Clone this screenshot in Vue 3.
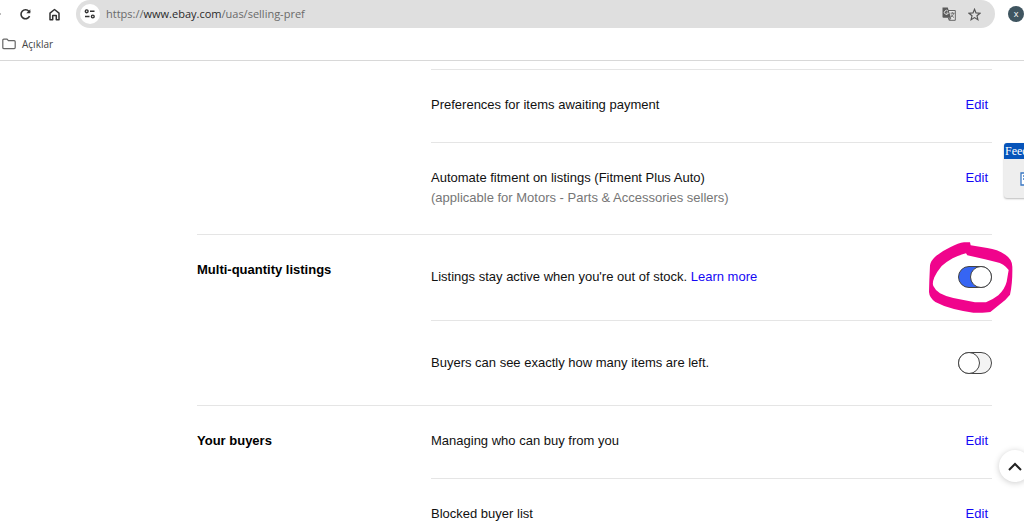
<script setup>
import { ref } from 'vue'

const sections = ref([
  {
    title: '',
    rows: [
      { id: 'awaiting', text: 'Preferences for items awaiting payment' },
      {
        id: 'fitment',
        text: 'Automate fitment on listings (Fitment Plus Auto)',
        note: '(applicable for Motors - Parts & Accessories sellers)',
      },
    ],
  },
  {
    title: 'Multi-quantity listings',
    rows: [
      { id: 'stock', text: "Listings stay active when you're out of stock.", link: 'Learn more', toggle: true, on: true, marked: true },
      { id: 'left', text: 'Buyers can see exactly how many items are left.', toggle: true, on: false },
    ],
  },
  {
    title: 'Your buyers',
    rows: [
      { id: 'who', text: 'Managing who can buy from you' },
      { id: 'blocked', text: 'Blocked buyer list' },
    ],
  },
])
</script>

<template>
  <div class="window">
    <header class="browser">
      <div class="toolbar">
        <button class="forward" aria-label="Forward" disabled>
          <svg width="2" height="2" viewBox="0 0 2 2"><path d="M0 0H1V2H0Z" fill="#bbb" /></svg>
        </button>
        <button class="icon-btn reload" aria-label="Reload">
          <svg width="13" height="13" viewBox="0 0 13 13" fill="none" stroke="#333" stroke-width="1.6">
            <path d="M10.6 8.2A4.5 4.5 0 1 1 10 3.4L11 4.4" />
            <path d="M11.3 1.2V5.2H7.3Z" fill="#333" stroke="none" />
          </svg>
        </button>
        <button class="icon-btn" aria-label="Home">
          <svg width="13" height="13" viewBox="0 0 13 13" fill="none" stroke="#333" stroke-width="1.5">
            <path d="M2 5.2L6.5 1.5L11 5.2V11.7H8.3V7.6H4.7V11.7H2Z" stroke-linejoin="round" />
          </svg>
        </button>
        <div class="address">
          <button class="site-info" aria-label="Site information">
            <svg width="12" height="12" viewBox="0 0 12 12" fill="none" stroke="#333" stroke-width="1.4">
              <circle cx="2.7" cy="3.3" r="1.4" />
              <path d="M6 3.3H10.5M1 8.5H5.5" />
              <circle cx="8.8" cy="8.5" r="1.4" />
            </svg>
          </button>
          <p class="url">https://<span class="host">www.ebay.com</span>/uas/selling-pref</p>
          <button class="icon-btn" aria-label="Translate this page">
            <svg width="14" height="14" viewBox="0 0 14 14">
              <path d="M5.5 3.5H13.3V13.3H7.5L6 10.5" fill="#e8e8e8" stroke="#666" />
              <path d="M0.5 0.5H5.8L9 10.8H1.5Q0.5 10.8 0.5 9.8Z" fill="#5b5b5b" />
              <path d="M6 4.2A2 2 0 1 0 6.3 6H4.5" fill="none" stroke="#e0e0e0" />
              <path d="M8.5 6.2H12.5M10.4 5.2V6.2M11.8 6.2Q11 9 9 10M9.3 7.5Q10 9.5 12 10.5M7 11L7.3 13.3L9 11Z" fill="none" stroke="#666" stroke-width=".9" />
            </svg>
          </button>
          <button class="icon-btn star" aria-label="Bookmark this tab">
            <svg width="13" height="13" viewBox="0 0 13 13" fill="none" stroke="#555" stroke-width="1.2">
              <path d="M6.5 1.3L8 4.9L12 5.2L9 7.8L9.9 11.7L6.5 9.6L3.1 11.7L4 7.8L1 5.2L5 4.9Z" />
            </svg>
          </button>
        </div>
        <button class="avatar" aria-label="Profile">x</button>
      </div>
      <nav class="bookmarks">
        <a href="#" class="bookmark">
          <svg width="14" height="12" viewBox="0 0 14 12" fill="none" stroke="#666" stroke-width="1.2">
            <path d="M.8 2.2Q.8 1.2 1.8 1.2H5L6.4 2.7H12.2Q13.2 2.7 13.2 3.7V9.6Q13.2 10.6 12.2 10.6H1.8Q.8 10.6 .8 9.6Z" />
          </svg>
          Açıklar
        </a>
      </nav>
    </header>

    <main class="page">
      <section v-for="(section, i) in sections" :key="i" class="section" :class="{ titled: section.title }">
        <h2 class="title">{{ section.title }}</h2>
        <div class="rows">
          <div v-for="row in section.rows" :key="row.id" class="row" :class="{ switchable: row.toggle }">
            <div class="text">
              <label v-if="row.toggle" :for="row.id">{{ row.text }}</label>
              <span v-else>{{ row.text }}</span>
              <template v-if="row.link">&nbsp;<a href="#">{{ row.link }}</a></template>
              <p v-if="row.note" class="note">{{ row.note }}</p>
            </div>
            <div v-if="row.toggle" class="switch">
              <input :id="row.id" v-model="row.on" type="checkbox" role="switch" />
              <svg v-if="row.marked" class="mark" viewBox="0 0 342 300" aria-hidden="true">
                <path
                  fill="#f0048c"
                  fill-rule="evenodd"
                  d="M180 37L182 46L232 54Q262 58 286 74Q307 88 307 110Q308 160 300 194Q288 210 268 224L241 246Q225 249 190 248Q160 244 132 237Q100 229 76 216Q58 203 57 186L58 150L60 106Q62 92 78 78Q98 62 122 51Q145 39 162 37ZM168 70Q145 76 128 85Q110 95 95 108Q80 126 73 142Q66 160 70 168Q76 181 90 190Q106 199 130 204L195 217H228Q250 208 265 196Q285 176 290 155L296 120Q282 101 258 96L225 88L172 76Z"
                />
              </svg>
            </div>
            <a v-else href="#" class="edit">Edit</a>
          </div>
        </div>
      </section>

      <aside class="feedback">
        <div class="feedback-head">Feedback</div>
        <div class="feedback-body">
          <svg width="14" height="14" viewBox="0 0 14 14" fill="#fff" stroke="#3a78c4" stroke-width="1.3">
            <path d="M1 1H13V13H1Z" />
            <path d="M3 4H11M3 7H11" />
          </svg>
        </div>
      </aside>
      <button class="to-top" aria-label="Back to top">
        <svg width="14" height="9" viewBox="0 0 14 9" fill="none" stroke="#222" stroke-width="2">
          <path d="M1 8L7 2L13 8" />
        </svg>
      </button>
    </main>
  </div>
</template>

<style>
body {
  margin: 0;
  background: #fff;
}
</style>

<style scoped>
.window {
  display: flex;
  flex-direction: column;
  height: 100vh;
  overflow: hidden;
  font-family: "Liberation Sans", Arial, sans-serif;
  font-size: 13px;
  line-height: 20px;
  color: #111;
}
button {
  padding: 0;
  border: 0;
  background: none;
  cursor: pointer;
}
svg {
  display: block;
}
p,
h2 {
  margin: 0;
}
a {
  color: #1408f5;
  text-decoration: none;
}
.browser {
  flex: none;
  border-bottom: 1px solid #d8d8d8;
  font-family: "Open Sans", "Noto Sans", sans-serif;
  font-size: 11px;
}
.toolbar {
  display: flex;
  align-items: center;
  height: 28px;
}
.forward {
  margin-right: 17px;
}
.reload {
  margin-right: 16px;
}
.address {
  display: flex;
  flex: 1;
  align-items: center;
  height: 28px;
  margin: 0 13px 0 15px;
  padding: 0 14px 0 4px;
  border-radius: 14px;
  background: #dfdfdf;
}
.site-info {
  display: grid;
  place-items: center;
  width: 20px;
  height: 20px;
  border-radius: 50%;
  background: #fff;
}
.url {
  flex: 1;
  padding-left: 6px;
  color: #6a6a6a;
}
.host {
  color: #2a2a2a;
}
.star {
  margin-left: 12px;
}
.avatar {
  width: 16px;
  height: 16px;
  border-radius: 50%;
  background: #3f5560;
  color: #fff;
  font: 9px/16px "Open Sans", sans-serif;
}
.bookmarks {
  display: flex;
  align-items: center;
  height: 32px;
  padding-left: 2px;
}
.bookmark {
  display: flex;
  align-items: center;
  gap: 6px;
  color: #444;
  font-size: 10px;
}
.page {
  position: relative;
  flex: 1;
  min-height: 0;
  padding: 8px 32px 0 197px;
  overflow: hidden;
}
.section {
  display: grid;
  grid-template-columns: 234px 1fr;
}
.titled {
  border-top: 1px solid #e5e5e5;
}
.title {
  padding-top: 25px;
  font-size: 13px;
  line-height: 20px;
  color: #000;
}
.row {
  display: flex;
  justify-content: space-between;
  padding: 25px 0 27px;
  border-top: 1px solid #e5e5e5;
}
.titled .row:first-child {
  border-top: 0;
}
.switchable {
  align-items: center;
  padding: 31px 0 32px;
}
.switchable:last-child {
  padding-bottom: 31px;
}
.note {
  line-height: 19px;
  color: #767676;
}
.edit {
  padding-right: 4px;
}
.switch {
  position: relative;
}
.switch input {
  display: flex;
  box-sizing: border-box;
  width: 34px;
  height: 22px;
  margin: 0;
  border: 1px solid #444;
  border-radius: 11px;
  background: #f4f4f4;
  appearance: none;
}
.switch input::before {
  content: "";
  box-sizing: border-box;
  width: 22px;
  height: 22px;
  margin: -1px;
  border: 1px solid #444;
  border-radius: 50%;
  background: #fff;
}
.switch input:checked {
  justify-content: flex-end;
  background: #3665f3;
}
.mark {
  position: absolute;
  top: -36px;
  left: -48px;
  width: 114px;
  height: 100px;
  pointer-events: none;
}
.feedback {
  position: absolute;
  top: 82px;
  right: -36px;
  width: 56px;
  border-radius: 3px;
  background: #eee;
  box-shadow: 0 1px 2px #bbb;
  overflow: hidden;
}
.feedback-head {
  padding-left: 1px;
  background: #0654ba;
  color: #fff;
  font: 12px/16px "Liberation Serif", serif;
}
.feedback-body {
  padding: 13px 16px 12px;
}
.to-top {
  position: absolute;
  top: 389px;
  right: -7px;
  display: grid;
  place-items: center;
  width: 32px;
  height: 32px;
  border-radius: 50%;
  background: #fff;
  box-shadow: 0 1px 6px #ccc;
}
</style>
